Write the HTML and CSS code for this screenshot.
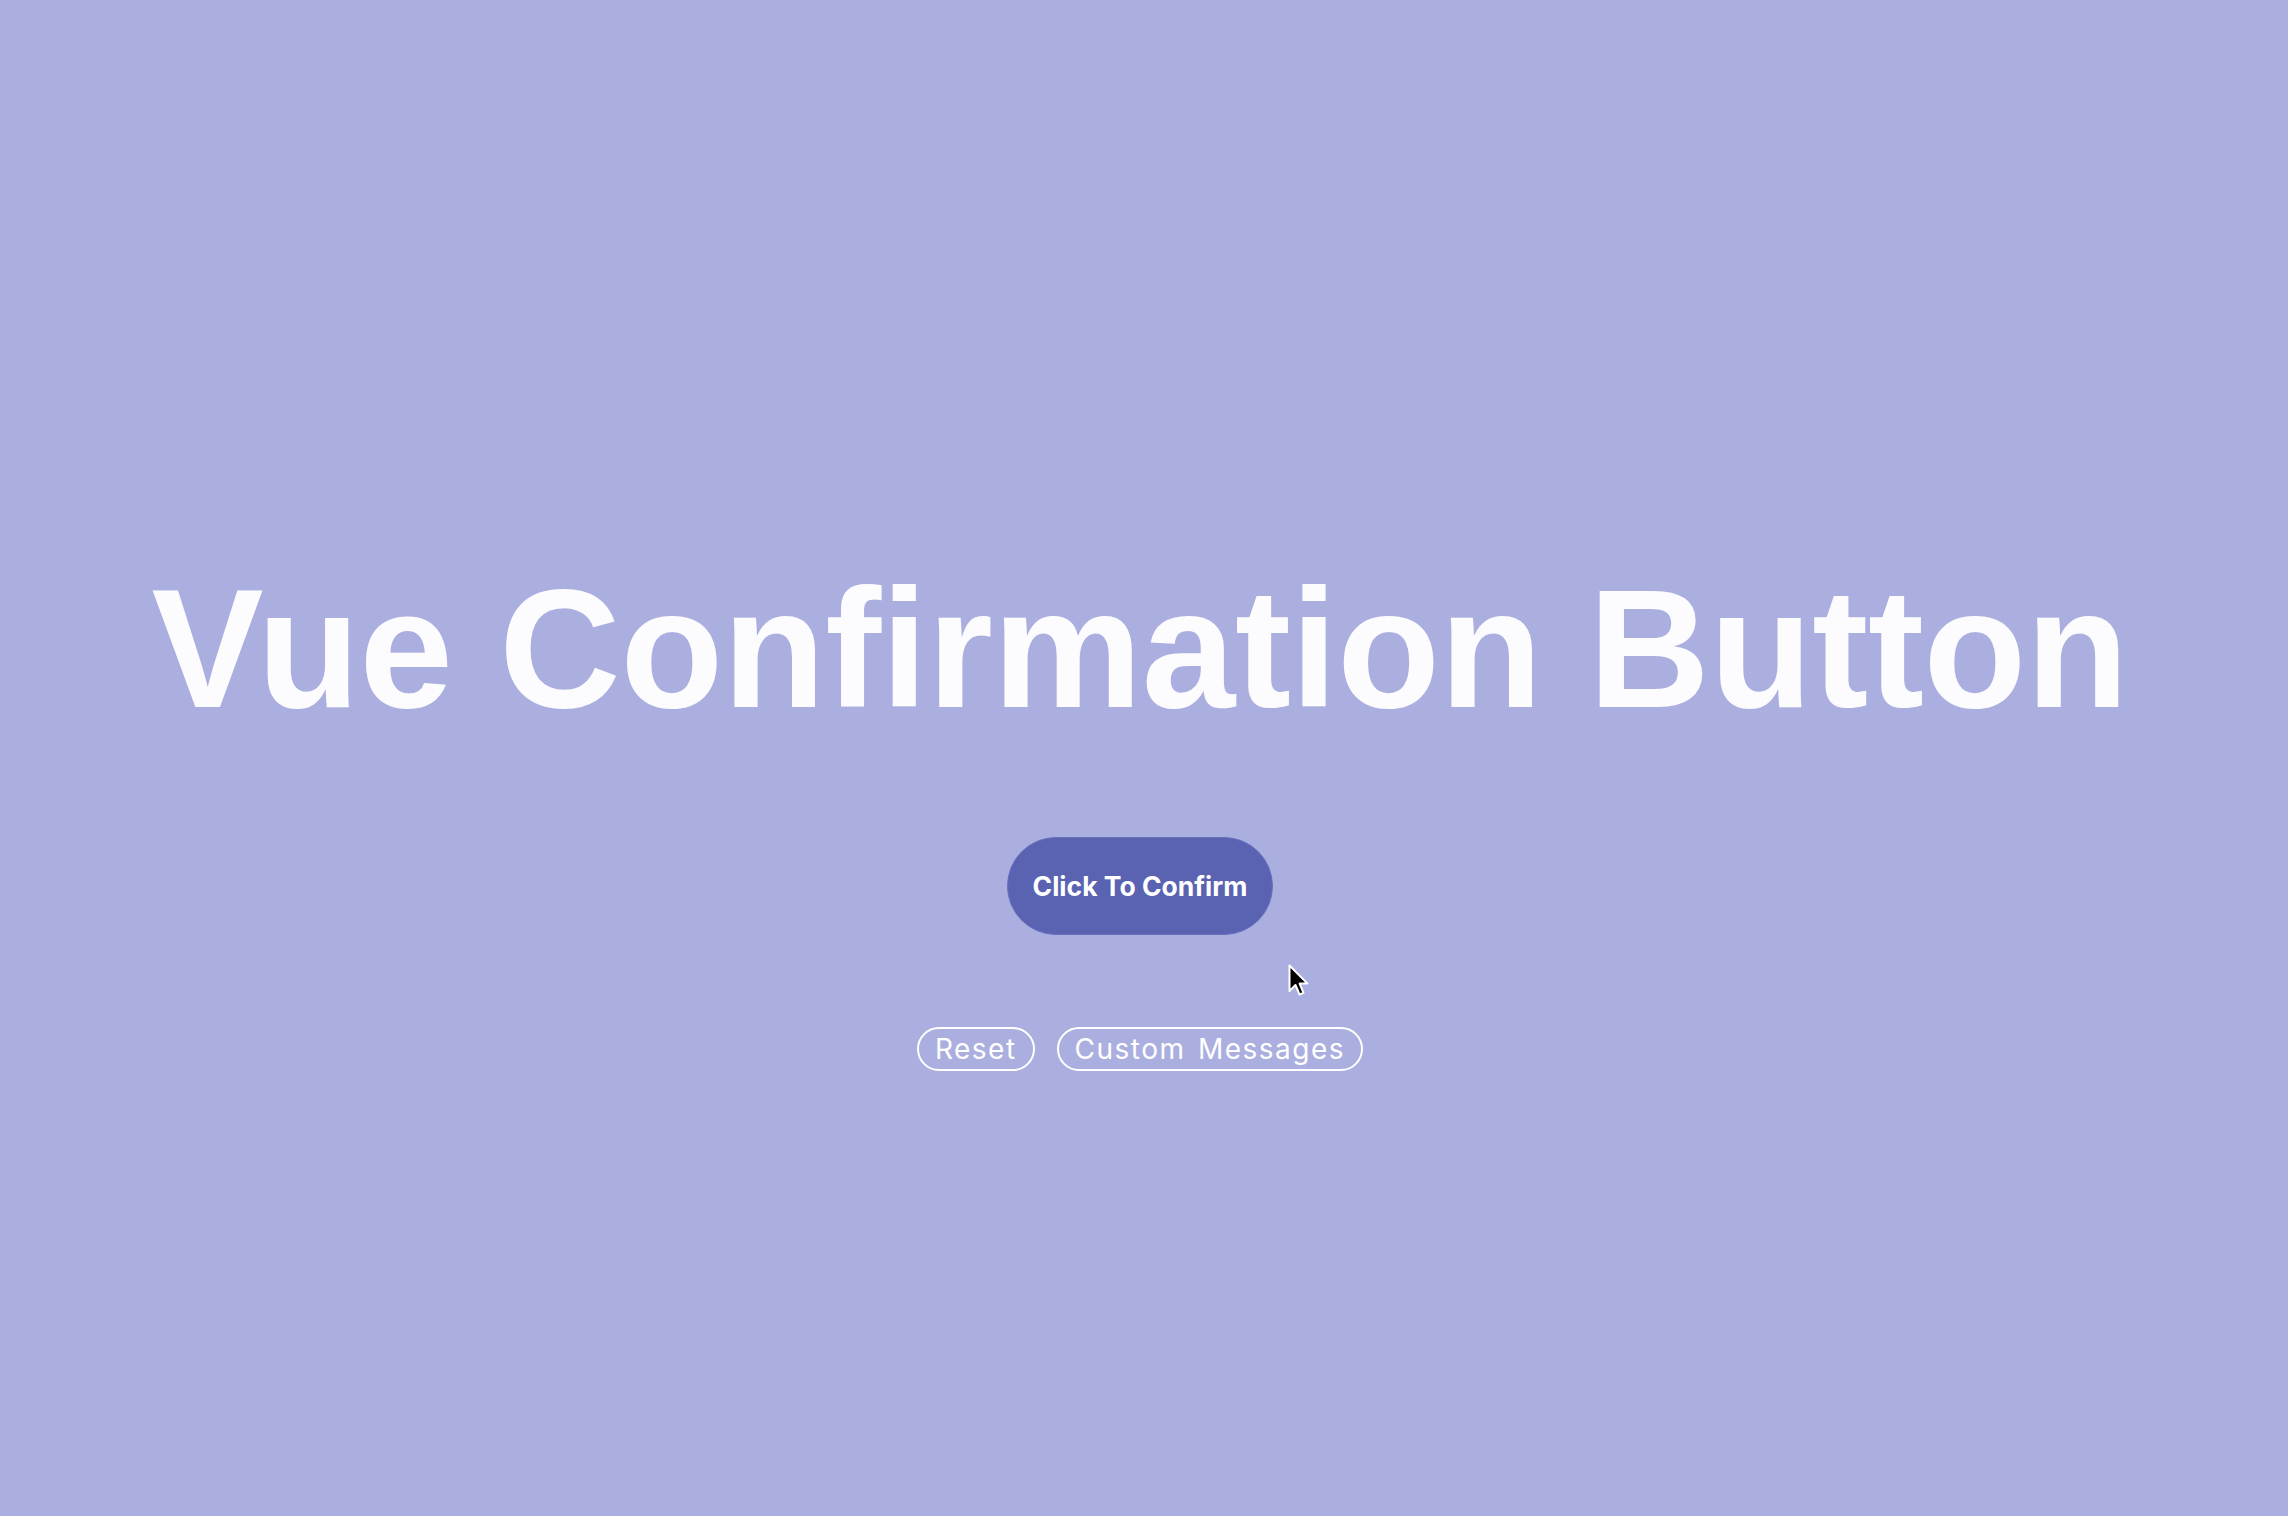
FILE: index.html
```html
<!DOCTYPE html>
<html lang="en">
<head>
<meta charset="utf-8">
<title>Vue Confirmation Button</title>
<link rel="stylesheet" href="styles.css">
</head>
<body>
<main class="page">
  <h1 class="title">Vue Confirmation Button</h1>
  <button class="confirm-btn">Click To Confirm</button>
  <div class="actions">
    <button class="ghost-btn">Reset</button>
    <button class="ghost-btn">Custom Messages</button>
  </div>
</main>
<svg class="cursor" width="22" height="34" viewBox="0 0 22 34" xmlns="http://www.w3.org/2000/svg">
  <path d="M1.5 1.5 L1.5 27 L7.5 21 L11.5 30.5 L15.5 28.8 L11.6 19.6 L19.5 19.6 Z" fill="#000" stroke="#fff" stroke-width="2" stroke-linejoin="round"/>
</svg>
</body>
</html>
```

FILE: styles.css
```css
html, body {
  margin: 0;
  padding: 0;
}
body {
  background: #abafe0;
  width: 2288px;
  height: 1516px;
  overflow: hidden;
  position: relative;
  font-family: Inter, "Liberation Sans", sans-serif;
}
.page {
  display: flex;
  flex-direction: column;
  align-items: center;
  padding-top: 565px;
  padding-right: 8px;
}
.title {
  margin: 0;
  font-family: "Liberation Sans", Arial, sans-serif;
  font-weight: 700;
  font-size: 168px;
  line-height: 1;
  letter-spacing: -0.2px;
  color: #fcfcfe;
  white-space: nowrap;
}
.confirm-btn {
  margin-top: 104px;
  height: 98px;
  padding: 0 25px;
  display: inline-flex;
  align-items: center;
  justify-content: center;
  background: #5a62b2;
  border: 1px solid #6970bb;
  border-radius: 49px;
  color: #ffffff;
  font-family: Inter, sans-serif;
  font-weight: 700;
  font-size: 26.5px;
  cursor: pointer;
}
.actions {
  margin-top: 92px;
  display: flex;
  gap: 22px;
}
.ghost-btn {
  height: 44px;
  padding: 0 16px;
  display: inline-flex;
  align-items: center;
  background: transparent;
  border: 2px solid #ffffff;
  border-radius: 22px;
  color: #ffffff;
  font-family: Inter, sans-serif;
  font-weight: 400;
  font-size: 28px;
  letter-spacing: 1.5px;
  word-spacing: 3px;
}
.cursor {
  position: absolute;
  left: 1288px;
  top: 964px;
}
```
